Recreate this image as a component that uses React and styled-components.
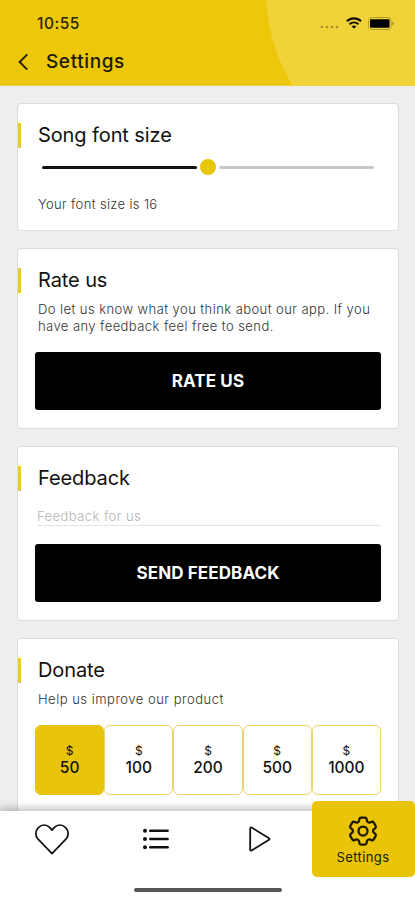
import React, { useState } from "react";
import styled, { createGlobalStyle } from "styled-components";
import { HiOutlineCog6Tooth } from "react-icons/hi2";

const GlobalStyle = createGlobalStyle`
  * {
    box-sizing: border-box;
  }
  body {
    margin: 0;
    background: #eeeeee;
    font-family: "Inter", "Liberation Sans", sans-serif;
    color: #111111;
  }
  button, input {
    font-family: inherit;
  }
`;

const Screen = styled.div`
  width: 415px;
  height: 900px;
  display: flex;
  flex-direction: column;
  overflow: hidden;
  background: #eeeeee;
`;

const Header = styled.header`
  flex: none;
  height: 86px;
  padding: 12px 20px 0 18px;
  background: radial-gradient(
    circle at 451px -10px,
    #f0d239 184.5px,
    #ecc70a 185.5px
  );
  border-bottom: 1px solid #ecd04a;
`;

const StatusBar = styled.div`
  height: 22px;
  padding-left: 19px;
  display: flex;
  align-items: center;
  justify-content: space-between;
`;

const StatusTime = styled.div`
  padding-top: 1px;
  font-weight: 500;
  font-size: 15.5px;
  line-height: 22px;
  letter-spacing: 0.5px;
  color: #2b2502;
`;

const StatusIcons = styled.div`
  display: flex;
  align-items: center;
  gap: 6px;
`;

const TitleBar = styled.div`
  height: 34px;
  margin-top: 11px;
  display: flex;
  align-items: center;
  gap: 17px;
`;

const PageTitle = styled.h1`
  margin: 0;
  font-weight: 500;
  font-size: 19px;
  line-height: 24px;
  letter-spacing: 0.6px;
  color: #1e1a02;
`;

const Content = styled.main`
  flex: 1;
  min-height: 0;
  overflow: hidden;
  padding: 17px 16px 0 17px;
  display: flex;
  flex-direction: column;
  gap: 17px;
`;

const Card = styled.section`
  flex: none;
  height: ${(props) => props.$height}px;
  padding: 19px 17px 0;
  background: #ffffff;
  border: 1px solid #dcdcdc;
  border-radius: 4px;
`;

const CardTitle = styled.h2`
  margin: 0 0 0 -17px;
  padding-left: 17px;
  border-left: 3px solid #e9c936;
  font-weight: 400;
  font-size: 20px;
  line-height: 25px;
  letter-spacing: -0.1px;
  color: #111111;
`;

const CardText = styled.p`
  margin: ${(props) => props.$top}px 0 0 3px;
  font-weight: 300;
  font-size: 13px;
  line-height: 17px;
  letter-spacing: ${(props) => props.$spacing}px;
  white-space: pre;
  color: #333333;
`;

const Slider = styled.div`
  height: 16px;
  margin: 11px 7px 0;
  display: flex;
  align-items: center;
  gap: 3px;
`;

const SliderTrack = styled.div`
  flex: 1;
  height: 3px;
  border-radius: 2px;
  background: ${(props) => (props.$filled ? "#111111" : "#c8c9c8")};
`;

const SliderThumb = styled.div`
  width: 16px;
  height: 16px;
  border-radius: 50%;
  background: #e8c60c;
`;

const ActionButton = styled.button`
  display: block;
  width: 346px;
  height: 58px;
  margin: ${(props) => props.$top}px 0 0;
  padding: 0;
  border: none;
  border-radius: 3px;
  background: #000000;
  color: #ffffff;
  font-weight: 700;
  font-size: 17px;
  letter-spacing: 0.1px;
`;

const FeedbackInput = styled.input`
  display: block;
  width: 344px;
  height: 19px;
  margin: 16px 0 0 2px;
  padding: 0;
  border: none;
  border-bottom: 1px solid #e4e4e4;
  outline: none;
  background: transparent;
  font-size: 13px;
  font-weight: 300;
  letter-spacing: 0.45px;
  &::placeholder {
    color: #b4b4b4;
    opacity: 1;
  }
`;

const AmountRow = styled.div`
  width: 346px;
  margin-top: 17px;
  display: grid;
  grid-template-columns: repeat(5, 1fr);
`;

const AmountCard = styled.button`
  height: 70px;
  padding: 0 0 2px;
  display: flex;
  flex-direction: column;
  align-items: center;
  justify-content: center;
  border: 1px solid ${(props) => (props.$active ? "#e8c40c" : "#ecd36c")};
  border-radius: 6px;
  background: ${(props) => (props.$active ? "#e8c40c" : "#ffffff")};
  color: #111111;
`;

const AmountCurrency = styled.span`
  font-size: 12px;
  line-height: 17px;
`;

const AmountValue = styled.span`
  font-weight: 500;
  font-size: 15.5px;
  line-height: 18px;
`;

const BottomNav = styled.nav`
  position: relative;
  flex: none;
  height: 89px;
  display: grid;
  grid-template-columns: repeat(3, 104px) 1fr;
  grid-template-rows: 66px 1fr;
  background: #ffffff;
  box-shadow: 0 -3px 8px rgba(0, 0, 0, 0.25);
`;

const NavItem = styled.div`
  display: flex;
  align-items: center;
  justify-content: center;
  padding-bottom: 10px;
`;

const ActiveNavItem = styled.div`
  height: 76px;
  margin-top: -10px;
  padding: 12px 1px 0 0;
  display: flex;
  flex-direction: column;
  align-items: center;
  border-radius: 5px;
  background: #e9c408;
  color: #1c1800;
`;

const NavLabel = styled.span`
  font-size: 13px;
  line-height: 16px;
  letter-spacing: 0.4px;
`;

const HomeIndicator = styled.div`
  grid-column: 1 / -1;
  justify-self: center;
  width: 148px;
  height: 4px;
  margin-top: 11px;
  border-radius: 2px;
  background: #555555;
`;

const BackIcon = () => (
  <svg width="11" height="18" viewBox="0 0 11 18" fill="none">
    <path d="M9.3 1.4L1.6 9L9.3 16.6" stroke="#231e02" strokeWidth="1.9" />
  </svg>
);

const SignalDots = () => (
  <svg width="20" height="14" viewBox="0 0 20 14" fill="#a8922a">
    {[2, 7, 12, 17].map((x) => (
      <circle key={x} cx={x} cy="11" r="1.3" />
    ))}
  </svg>
);

const WifiIcon = () => (
  <svg width="16" height="12" viewBox="0 0 16 12" fill="none" stroke="#15120a">
    <path d="M0.9 4.3C4.9 0.4 11.1 0.4 15.1 4.3" strokeWidth="2.1" />
    <path d="M3.5 7.2C6.1 4.8 9.9 4.8 12.5 7.2" strokeWidth="2" />
    <path d="M5.6 9.3C7 8.1 9 8.1 10.4 9.3L8 11.8Z" fill="#15120a" stroke="none" />
  </svg>
);

const BatteryIcon = () => (
  <svg width="27" height="13" viewBox="0 0 27 13">
    <rect
      x="0.5"
      y="0.5"
      width="22.5"
      height="12"
      rx="3"
      fill="none"
      stroke="#b39c2d"
    />
    <rect x="2" y="2.2" width="19.5" height="8.6" rx="1.2" fill="#000000" />
    <path d="M24.3 4.5C26.3 5.2 26.3 7.8 24.3 8.5Z" fill="#9c8727" />
  </svg>
);

const HeartIcon = () => (
  <svg width="36" height="34" viewBox="0 0 36 34" fill="none">
    <path
      d="M18 8.1L15.6 5.4C12.6 2.2 7.9 2.2 4.6 5.3C1.1 8.8 0.9 13.6 4.1 17.2L18 31.6L31.9 17.2C35.1 13.6 34.9 8.8 31.4 5.3C28.1 2.2 23.4 2.2 20.4 5.4Z"
      stroke="#111111"
      strokeWidth="1.7"
      strokeLinejoin="round"
    />
  </svg>
);

const ListIcon = () => (
  <svg width="28" height="40" viewBox="0 0 28 40">
    {[11.7, 20, 28.3].map((y) => (
      <g key={y}>
        <circle cx="3" cy={y} r="2" fill="#111111" />
        <path
          d={`M8.3 ${y}H25.6`}
          stroke="#111111"
          strokeWidth="2.6"
          strokeLinecap="round"
        />
      </g>
    ))}
  </svg>
);

const PlayIcon = () => (
  <svg width="24" height="40" viewBox="0 0 24 40" fill="none">
    <path
      d="M2.2 9.3V30.7C2.2 31.5 3 31.9 3.6 31.5L21 20.8C21.7 20.4 21.7 19.6 21 19.2L3.6 8.5C3 8.1 2.2 8.5 2.2 9.3Z"
      stroke="#111111"
      strokeWidth="1.8"
    />
  </svg>
);

const amounts = [50, 100, 200, 500, 1000];

const App = () => {
  const [selected, setSelected] = useState(50);

  return (
    <Screen>
      <GlobalStyle />
      <Header>
        <StatusBar>
          <StatusTime>10:55</StatusTime>
          <StatusIcons>
            <SignalDots />
            <WifiIcon />
            <BatteryIcon />
          </StatusIcons>
        </StatusBar>
        <TitleBar>
          <BackIcon />
          <PageTitle>Settings</PageTitle>
        </TitleBar>
      </Header>

      <Content>
        <Card $height={128}>
          <CardTitle>Song font size</CardTitle>
          <Slider>
            <SliderTrack $filled />
            <SliderThumb />
            <SliderTrack />
          </Slider>
          <CardText $top={21} $spacing={0.35}>
            Your font size is 16
          </CardText>
        </Card>

        <Card $height={181}>
          <CardTitle>Rate us</CardTitle>
          <CardText $top={8} $spacing={0.43}>
            {"Do let us know what you think about our app. If you\nhave any feedback feel free to send."}
          </CardText>
          <ActionButton $top={17}>RATE US</ActionButton>
        </Card>

        <Card $height={175}>
          <CardTitle>Feedback</CardTitle>
          <FeedbackInput placeholder="Feedback for us" />
          <ActionButton $top={18}>SEND FEEDBACK</ActionButton>
        </Card>

        {/* runs on below the bottom nav */}
        <Card $height={260}>
          <CardTitle>Donate</CardTitle>
          <CardText $top={8} $spacing={0.5}>
            Help us improve our product
          </CardText>
          <AmountRow>
            {amounts.map((amount) => (
              <AmountCard
                key={amount}
                $active={amount === selected}
                onClick={() => setSelected(amount)}
              >
                <AmountCurrency>$</AmountCurrency>
                <AmountValue>{amount}</AmountValue>
              </AmountCard>
            ))}
          </AmountRow>
        </Card>
      </Content>

      <BottomNav>
        <NavItem>
          <HeartIcon />
        </NavItem>
        <NavItem>
          <ListIcon />
        </NavItem>
        <NavItem>
          <PlayIcon />
        </NavItem>
        <ActiveNavItem>
          <HiOutlineCog6Tooth size={36} />
          <NavLabel>Settings</NavLabel>
        </ActiveNavItem>
        <HomeIndicator />
      </BottomNav>
    </Screen>
  );
};

export default App;
